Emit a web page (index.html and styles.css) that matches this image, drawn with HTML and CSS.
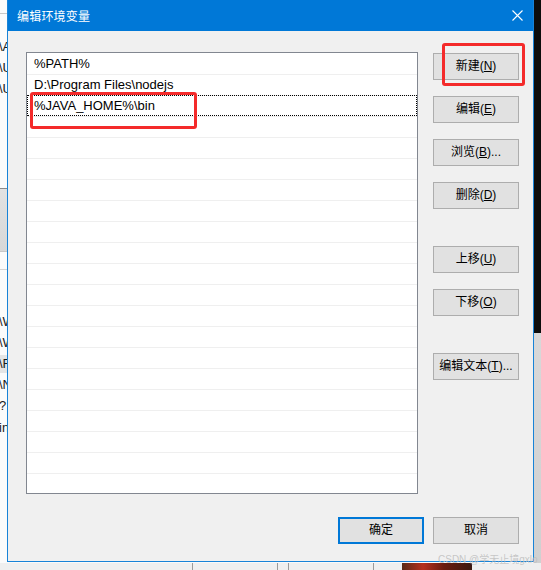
FILE: index.html
```html
<!DOCTYPE html>
<html lang="zh-CN">
<head>
<meta charset="utf-8">
<title>编辑环境变量</title>
<link rel="stylesheet" href="styles.css">
</head>
<body>
<div class="desktop">
  <div class="bg-left">
    <div class="bg-line l1"></div>
    <div class="bg-text t1">\APP</div>
    <div class="bg-text t2">\Users</div>
    <div class="bg-text t3">\Users</div>
    <div class="bg-band"></div>
    <div class="bg-text t4">\Win</div>
    <div class="bg-text t5">\Win</div>
    <div class="bg-text t6 sel">\Fil</div>
    <div class="bg-text t7">\Nod</div>
    <div class="bg-text t8">?</div>
    <div class="bg-text t9">in</div>
  </div>
  <div class="bg-right"></div>
  <div class="bg-bottom">
    <span class="vl v1"></span><span class="vl v2"></span><span class="vl v3"></span><span class="vl v4"></span>
    <span class="photo"></span>
  </div>

  <div class="dialog">
    <div class="titlebar">
      <span class="title">编辑环境变量</span>
      <svg class="close" width="11" height="11" viewBox="0 0 11 11"><path d="M0.5 0.5L10.5 10.5M10.5 0.5L0.5 10.5" stroke="#fff" stroke-width="1.1" fill="none"/></svg>
    </div>
    <div class="body">
      <div class="main">
        <div class="list">
          <div class="row">%PATH%</div>
          <div class="row">D:\Program Files\nodejs</div>
          <div class="row focus">%JAVA_HOME%\bin</div>
          <div class="row"></div><div class="row"></div><div class="row"></div>
          <div class="row"></div><div class="row"></div><div class="row"></div>
          <div class="row"></div><div class="row"></div><div class="row"></div>
          <div class="row"></div><div class="row"></div><div class="row"></div>
          <div class="row"></div><div class="row"></div><div class="row"></div>
          <div class="row"></div><div class="row"></div><div class="row"></div>
        </div>
        <div class="side">
          <button class="btn first">新建(<u>N</u>)</button>
          <button class="btn">编辑(<u>E</u>)</button>
          <button class="btn">浏览(<u>B</u>)...</button>
          <button class="btn">删除(<u>D</u>)</button>
          <button class="btn far">上移(<u>U</u>)</button>
          <button class="btn">下移(<u>O</u>)</button>
          <button class="btn far">编辑文本(<u>T</u>)...</button>
        </div>
      </div>
      <div class="footer">
        <button class="btn default">确定</button>
        <button class="btn">取消</button>
      </div>
    </div>
  </div>

  <div class="mark mark-row"></div>
  <div class="mark mark-btn"></div>
  <div class="watermark">CSDN @学无止境gxlo</div>
</div>
</body>
</html>
```
FILE: styles.css
```css
html, body {
  margin: 0;
  padding: 0;
  background: #fafafa;
}
body {
  font-family: "Liberation Sans", "Noto Sans CJK SC", sans-serif;
  font-size: 12px;
  color: #000;
}
.desktop {
  position: relative;
  width: 541px;
  height: 570px;
  overflow: hidden;
  background: #fafafa;
}

/* background windows */
.bg-left {
  position: absolute;
  left: 0;
  top: 0;
  width: 8px;
  height: 570px;
  background: #fbfbfb;
}
.bg-line {
  position: absolute;
  left: 0;
  width: 8px;
  height: 1px;
  background: #c8c8c8;
}
.l1 { top: 13px; }
.bg-band {
  position: absolute;
  left: 0;
  top: 188px;
  width: 8px;
  height: 62px;
  border-top: 1px solid #8a8a8a;
  border-bottom: 1px solid #c8c8c8;
  background: linear-gradient(#e2e2e2, #d8d8d8);
}
.bg-band::after {
  content: "";
  position: absolute;
  left: 0;
  right: 0;
  top: 80px;
  height: 1px;
  background: #d4d4d4;
}
.bg-text {
  position: absolute;
  left: -1px;
  font-size: 13px;
  line-height: 18px;
  color: #1a1a1a;
  white-space: nowrap;
}
.t1 { top: 38px; }
.t2 { top: 59px; }
.t3 { top: 80px; }
.t4 { top: 313px; }
.t5 { top: 334px; }
.t6 { top: 355px; }
.t7 { top: 376px; }
.t8 { top: 397px; }
.t9 { top: 419px; }
.sel { background: #e5e5e5; width: 20px; }

.bg-right {
  position: absolute;
  left: 534px;
  top: 0;
  width: 7px;
  height: 570px;
  background: linear-gradient(#0c0c0c 0, #0c0c0c 333px, #d8d8d8 333px, #d0d0d0 100%);
}
.bg-bottom {
  position: absolute;
  left: 0;
  top: 563px;
  width: 541px;
  height: 7px;
  background: #efefef;
}
.vl {
  position: absolute;
  top: 0;
  width: 1px;
  height: 7px;
  background: #9a9a9a;
}
.v1 { left: 192px; }
.v2 { left: 277px; }
.v3 { left: 288px; }
.v4 { left: 373px; }
.photo {
  position: absolute;
  left: 402px;
  top: 0;
  width: 70px;
  height: 7px;
  background: linear-gradient(90deg, #5a2a16, #b5301e 30%, #6a1b10 60%, #3c1a10);
}

/* dialog */
.dialog {
  position: absolute;
  left: 7px;
  top: 0;
  width: 525px;
  height: 561px;
  border: 1px solid #1883d7;
  border-top: 0;
  background: #f0f0f0;
  display: flex;
  flex-direction: column;
  z-index: 1;
}
.titlebar {
  height: 31px;
  background: #0078d7;
  display: flex;
  align-items: center;
  justify-content: space-between;
  padding: 0 10px 0 9px;
}
.title {
  color: #fff;
  font-family: "Noto Sans CJK SC", sans-serif;
  font-size: 12px;
  letter-spacing: 0.2px;
}
.close {
  margin-top: -1px;
}
.body {
  flex: 1;
  padding: 21px 14px 0 18px;
}
.main {
  display: flex;
  gap: 15px;
}
.list {
  width: 390px;
  height: 439px;
  padding-top: 1px;
  border: 1px solid #828790;
  background: #fff;
  overflow: hidden;
}
.row {
  position: relative;
  height: 20px;
  line-height: 20px;
  border-bottom: 1px solid #efefef;
  padding-left: 7px;
  font-size: 13px;
  white-space: nowrap;
}
.row.focus::before {
  content: "";
  position: absolute;
  left: 0;
  right: 0;
  top: -1px;
  bottom: 0;
  border: 1px dotted #000;
}
.side {
  display: flex;
  flex-direction: column;
  width: 86px;
}
.btn {
  box-sizing: border-box;
  width: 86px;
  height: 27px;
  padding: 0;
  margin: 0;
  border: 1px solid #adadad;
  background: #e1e1e1;
  font-family: "Liberation Sans", "Noto Sans CJK SC", sans-serif;
  font-size: 12px;
  color: #000;
  line-height: 25px;
  text-align: center;
}
.btn u {
  text-underline-offset: 1px;
}
.side .btn { margin-top: 16px; }
.side .btn.first { margin-top: 1px; }
.side .btn.far { margin-top: 37px; }
.footer {
  display: flex;
  justify-content: flex-end;
  gap: 9px;
  margin-top: 23px;
}
.btn.default {
  border: 2px solid #0078d7;
  line-height: 23px;
}

/* annotation overlays */
.mark {
  position: absolute;
  border: 3px solid #f42a2a;
  border-radius: 3px;
  z-index: 2;
}
.mark-row {
  left: 30px;
  top: 92px;
  width: 161px;
  height: 31px;
}
.mark-btn {
  left: 442px;
  top: 43px;
  width: 77px;
  height: 37px;
}
.watermark {
  position: absolute;
  left: 438px;
  top: 553px;
  font-family: "Liberation Sans", "Noto Sans CJK SC", sans-serif;
  font-size: 10px;
  line-height: 14px;
  color: rgba(190, 190, 190, 0.85);
  white-space: nowrap;
  z-index: 3;
}
```
